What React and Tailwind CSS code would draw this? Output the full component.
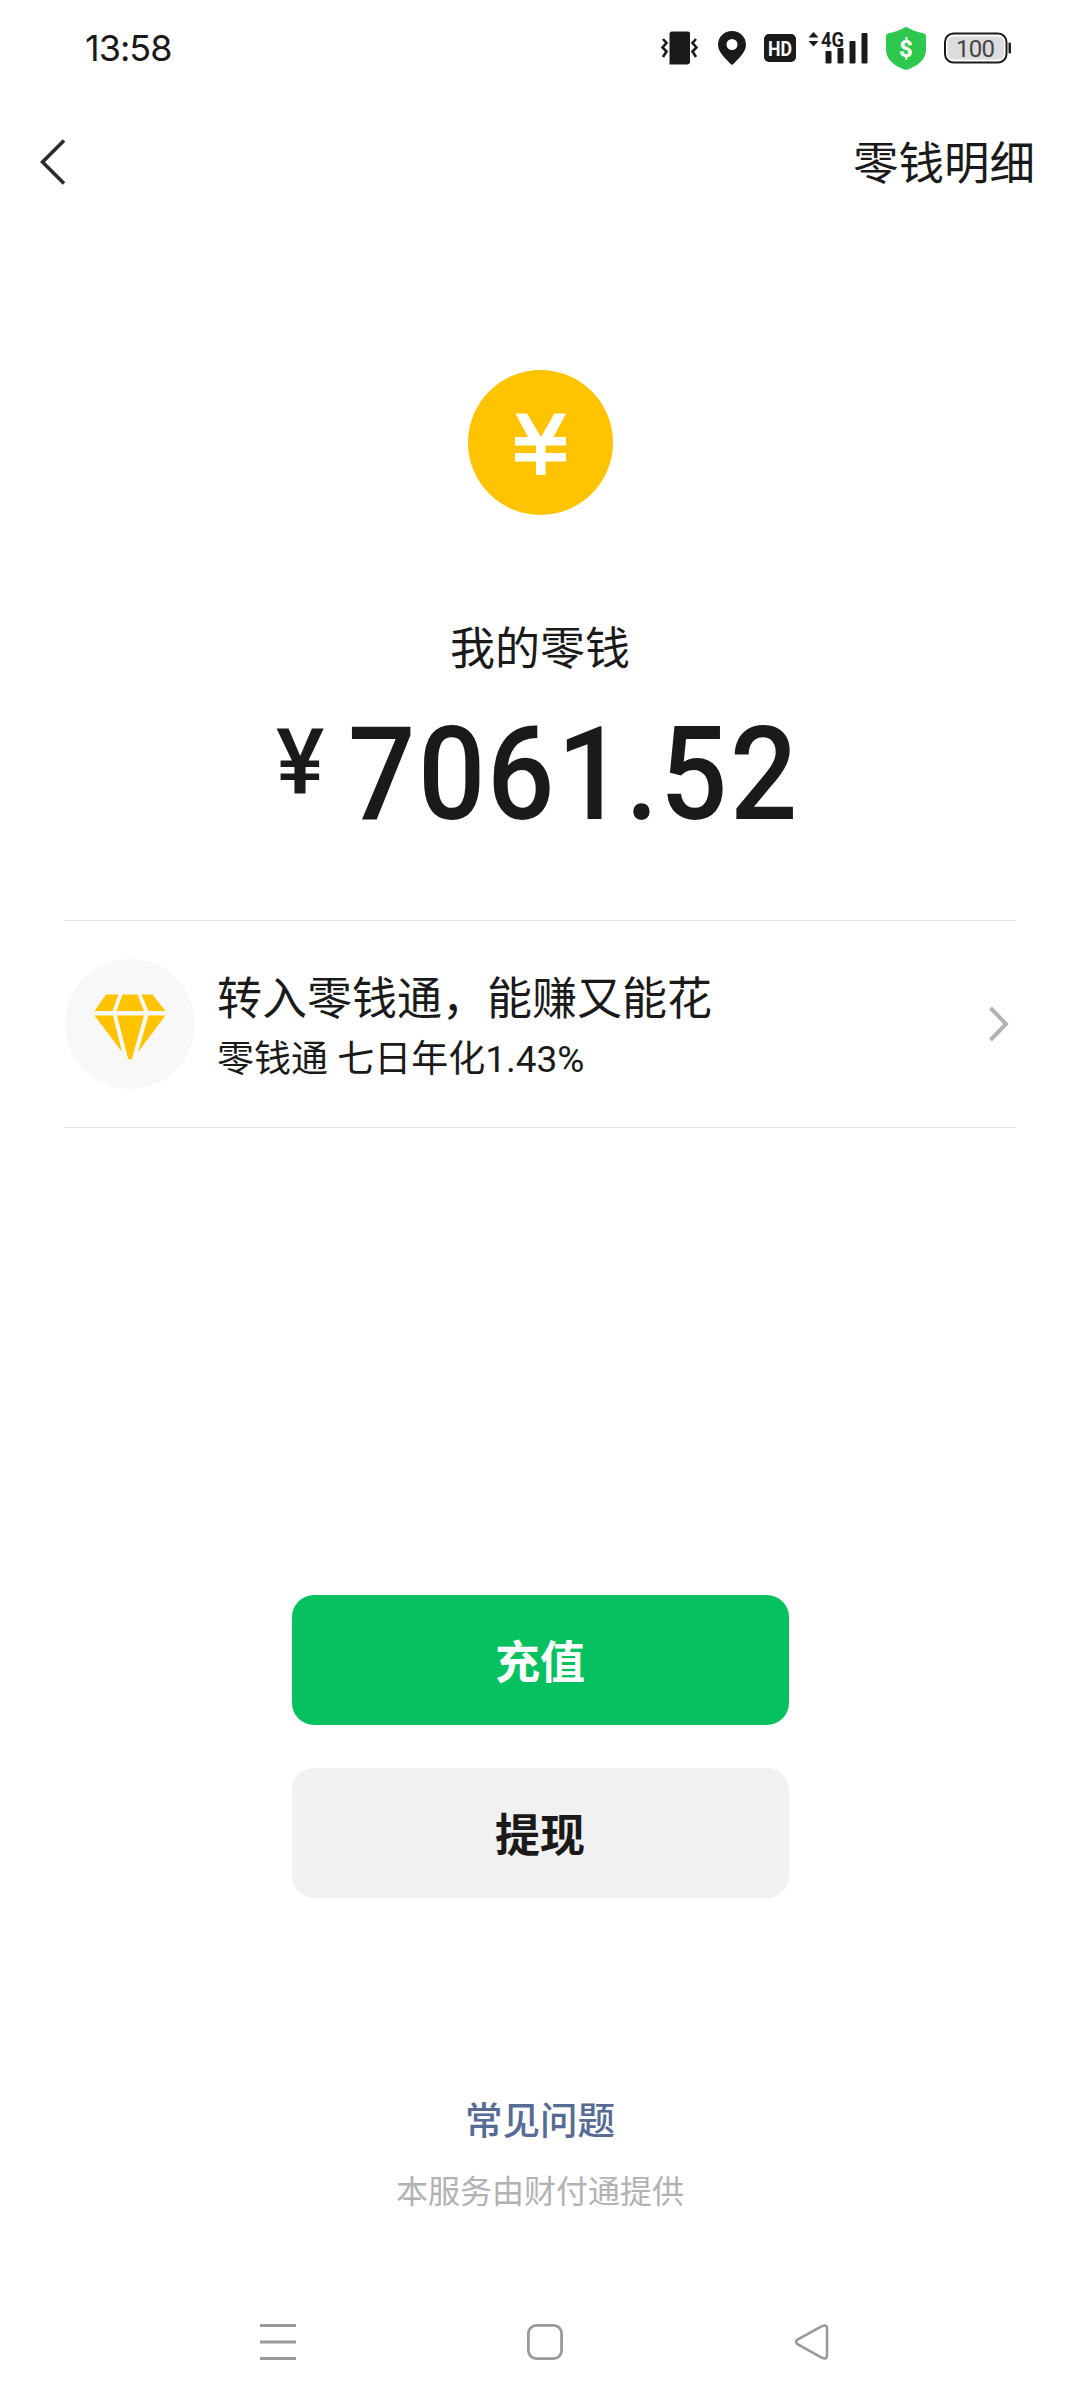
const FONT = "font-['Roboto','Noto_Sans_CJK_SC',sans-serif]"

const digits = ['7', '0', '6', '1', '.', '5', '2']

function VibrateIcon() {
  return (
    <svg className="w-[37px] h-[34px]" viewBox="0 0 37 34" fill="none">
      <path d="M11 .5h16a2 2 0 0 1 2 2v28a3 3 0 0 1-3 3H8.500V3a2.500 2.500 0 0 1 2.500-2.500z" fill="#1a1a1a" />
      <path d="M2 8l3.500 4-4 4.500 4 4L2 26M35 8l-3.500 4 4 4.500-4 4L35 26" stroke="#1a1a1a" strokeWidth="2.600" />
    </svg>
  )
}

function PinIcon() {
  return (
    <svg className="w-7 h-[34px]" viewBox="0 0 28 34">
      <path
        fillRule="evenodd"
        fill="#1a1a1a"
        d="M14 0C6.200 0 0 6 0 13.800c0 4.600 2.600 8.200 5.500 11.700L12.600 33a2 2 0 0 0 2.800 0l7.100-7.500C25.400 22 28 18.400 28 13.800 28 6 21.800 0 14 0zm0 8a5.500 5.500 0 1 1 0 11 5.500 5.500 0 0 1 0-11z"
      />
    </svg>
  )
}

function SignalIcon() {
  return (
    <svg className="w-[61px] h-[42px]" viewBox="0 -4 61 42" fill="#1a1a1a">
      <path d="M6.500 1l5 5.500h-10zM6.500 15.500l5-5.500h-10z" />
      <text x="14" y="15.500" fontSize="21" fontWeight="700" textLength="23" lengthAdjust="spacingAndGlyphs">4G</text>
      <rect x="18.500" y="20" width="6" height="12.500" rx="1" />
      <rect x="30.500" y="17" width="6" height="15.500" rx="1" />
      <rect x="42.500" y="10" width="6" height="22.500" rx="1" />
      <rect x="54.500" y="2" width="6" height="30.500" rx="1" />
    </svg>
  )
}

function ShieldIcon() {
  return (
    <svg className="w-10 h-[43px]" viewBox="0 0 40 43">
      <path d="M18.500.4a4 4 0 0 1 3 0C26 3 31 5 37.500 6.200A3 3 0 0 1 40 9v14c0 9-8 16-18.500 19.600a4 4 0 0 1-3 0C8 39 0 32 0 23V9a3 3 0 0 1 2.500-2.800C9 5 14 3 18.500.4z" fill="#2dc84d" />
      <text x="20" y="30" fontSize="24" fontWeight="800" textAnchor="middle" fill="#fff">$</text>
    </svg>
  )
}

function BatteryIcon() {
  return (
    <svg className="w-[67px] h-[32px]" viewBox="0 0 67 32">
      <rect x="1" y="1.500" width="61.500" height="29" rx="8.500" fill="none" stroke="#1a1a1a" strokeWidth="2" />
      <rect x="3.500" y="4.500" width="56.500" height="23" rx="5.500" fill="#dcdcdc" />
      <rect x="64.500" y="10.500" width="2.500" height="11" rx="1" fill="#1a1a1a" />
      <text x="31.500" y="24.500" fontSize="24" textAnchor="middle" textLength="39" fill="#444">100</text>
    </svg>
  )
}

function StatusBar() {
  return (
    <div className="flex h-24 items-center justify-between pl-[85px] pr-[69px]">
      <span className="font-['Inter'] text-[36px] leading-none tracking-[-1px] text-[#1a1a1a]">13:58</span>
      <div className="flex items-center">
        <VibrateIcon />
        <div className="ml-5"><PinIcon /></div>
        <div className="ml-[18px] h-7 w-8 rounded-[5px] bg-[#1a1a1a]">
          <svg className="w-8 h-7" viewBox="0 0 32 28">
            <text x="4" y="21.500" fontSize="21" fontWeight="700" textLength="24" lengthAdjust="spacingAndGlyphs" fill="#fff">HD</text>
          </svg>
        </div>
        <div className="ml-[11px]"><SignalIcon /></div>
        <div className="ml-[18px]"><ShieldIcon /></div>
        <div className="ml-[18px]"><BatteryIcon /></div>
      </div>
    </div>
  )
}

function Header() {
  return (
    <div className="flex h-[132px] items-center justify-between pl-10 pr-[45px]">
      <svg className="w-[26px] h-[46px]" viewBox="0 0 26 46" fill="none">
        <path d="M24 1.500L2.500 23 24 44.500" stroke="#2b2b2b" strokeWidth="3.600" />
      </svg>
      <span className="pt-[6px] text-[45.500px] leading-[60px]">零钱明细</span>
    </div>
  )
}

function Balance() {
  return (
    <div className="flex flex-col items-center pt-[142px]">
      <svg className="w-[145px] h-[145px]" viewBox="0 0 145 145">
        <circle cx="72.500" cy="72.500" r="72.500" fill="#ffc300" />
        <path d="M47.500 43.500H59l14 23.500 13.500-23.500H98L85.500 67H98v8.500H77.500V83H98v8.500H77.500V105h-9.500V91.500H47V83h21v-7.500H47V67h13z" fill="#fff" />
      </svg>
      <div className="mt-[105px] text-[45px] leading-[60px]">我的零钱</div>
      <div className="mt-[19px] flex h-[150px] w-[528px] font-medium">
        <span className="w-[71px] pt-[4px] text-[91px] leading-[118px]">¥</span>
        {digits.map((d, i) => (
          <span key={i} className={`${d === '.' ? 'w-[34px]' : 'w-[69.500px]'} flex shrink-0 justify-center text-[129px] leading-[152px]`}>
            <span className="scale-x-[0.92]">{d}</span>
          </span>
        ))}
      </div>
    </div>
  )
}

function LqtRow() {
  return (
    <div className="mx-[65px] mt-[71px] flex h-[208px] items-center border-y border-[#e2e2e2]">
      <div className="flex h-[130px] w-[130px] items-center justify-center rounded-full bg-[#f8f8f8]">
        <svg className="mt-[6px] w-[72px] h-[66px]" viewBox="0 0 72 66" fill="#ffc300">
          <path d="M12 .5h12.500L18.500 17H.5zM28.500.5h15L50 17H22.500zM47.500.5H58.500L71.500 17h-17z" />
          <path d="M.5 21.500h18.500l9 36.500zM23 21.500h27L38 64.500q-2 2-4 0zM54.500 21.500H71.500L44 58z" />
        </svg>
      </div>
      <div className="ml-[22px] flex-1 pt-[11px]">
        <div className="text-[45px] leading-[60px]">转入零钱通，能赚又能花</div>
        <div className="mt-px text-[37px] leading-[58px]">零钱通 七日年化1.43%</div>
      </div>
      <svg className="mr-[6px] w-5 h-9" viewBox="0 0 20 36" fill="none">
        <path d="M1.500 2L17 18 1.500 34" stroke="#b2b2b2" strokeWidth="4" />
      </svg>
    </div>
  )
}

function NavBar() {
  return (
    <div className="mt-auto flex h-[133px] items-center justify-between pl-[260px] pr-[251px]">
      <svg className="w-9 h-9" viewBox="0 0 36 36" stroke="#999" strokeWidth="3">
        <path d="M0 1.500h36M0 18h36M0 34.500h36" />
      </svg>
      <svg className="w-9 h-9" viewBox="0 0 36 36" fill="none" stroke="#999" strokeWidth="2.800">
        <rect x="1.400" y="1.400" width="33.200" height="33.200" rx="8" />
      </svg>
      <svg className="w-[35px] h-9" viewBox="0 0 35 36" fill="none" stroke="#999" strokeWidth="2.600">
        <path d="M28 2.200L3.500 15.500q-3 2.300 0 4.600L28 33.800q5 2 5-2V4.200q0-4-5-2z" />
      </svg>
    </div>
  )
}

function App() {
  return (
    <div className={`flex h-[2408px] w-[1080px] flex-col bg-white text-[#1a1a1a] ${FONT}`}>
      <StatusBar />
      <Header />
      <Balance />
      <LqtRow />
      <div className="mt-[467px] flex flex-col items-center gap-[43px]">
        <button className="h-[130px] w-[497px] rounded-[22px] bg-[#07c160] pt-[8px] text-[45px] font-bold text-white">充值</button>
        <button className="h-[130px] w-[497px] rounded-[22px] bg-[#f1f1f1] pt-[8px] text-[45px] font-bold">提现</button>
      </div>
      <div className="mt-[193px] flex flex-col items-center">
        <a className="text-[37.500px] leading-[60px] font-medium text-[#576b95]">常见问题</a>
        <p className="mt-[16px] text-[32px] leading-[50px] text-[#b2b2b2]">本服务由财付通提供</p>
      </div>
      <NavBar />
    </div>
  )
}

export default App
